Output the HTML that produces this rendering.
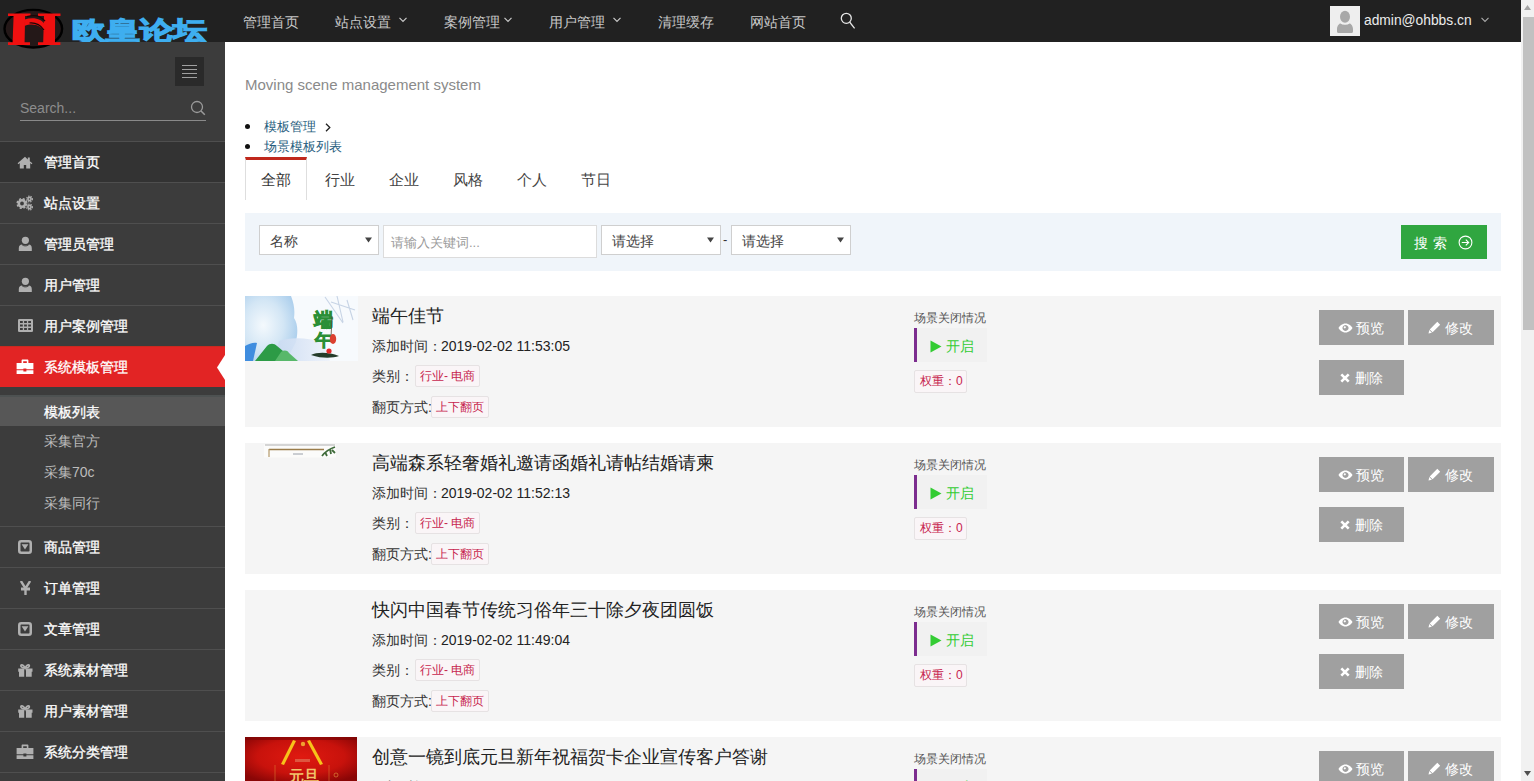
<!DOCTYPE html>
<html><head><meta charset="utf-8">
<style>
*{box-sizing:border-box;margin:0;padding:0}
html,body{width:1534px;height:781px;overflow:hidden;background:#fff;font-family:"Liberation Sans",sans-serif}
.abs{position:absolute}
#top{position:absolute;left:0;top:0;width:1521px;height:42px;background:#212121}
#side{position:absolute;left:0;top:42px;width:225px;height:739px;background:#3c3c3c}
#sb{position:absolute;left:1521px;top:0;width:13px;height:781px;background:#f1f1f1}
#main{position:absolute;left:225px;top:42px;width:1296px;height:739px;background:#fff}
.nav{position:absolute;top:14px;font-size:14px;line-height:16px;color:#c9c9c9;white-space:nowrap}
.chev{position:absolute;top:17px;width:8px;height:6px}
.mi{position:absolute;left:0;width:225px;height:41px;border-top:1px solid #4f4f4f}
.mi .t{position:absolute;left:44px;top:12px;font-size:14px;line-height:16px;color:#fff;white-space:nowrap;-webkit-text-stroke:0.3px #fff}
.mi svg{position:absolute;left:17px;top:13px}
.sub{position:absolute;left:0;width:225px;height:31px}
.sub[style*="575757"]{border-top:2px solid #4d5151}
.sub .t{position:absolute;left:44px;top:7px;font-size:14px;line-height:16px;color:#bdbdbd;white-space:nowrap}

.m{position:absolute;white-space:nowrap}
.sel{position:absolute;background:#fff;border:1px solid #cfcfcf}
.sel .t{position:absolute;left:10px;top:7px;font-size:14px;line-height:16px;color:#444}
.sel svg{position:absolute;right:6px;top:11px}
.card{position:absolute;left:20px;width:1256px;height:131px;background:#f5f5f5}
.card .title{position:absolute;left:127px;top:10px;font-size:18px;line-height:20px;color:#222}
.card .l{position:absolute;left:127px;font-size:14px;line-height:16px;color:#333;white-space:nowrap}
.tag{position:absolute;height:22px;background:#faf5f7;border:1px solid #e6e2e3;border-radius:2px;font-size:12px;line-height:20px;color:#c7254e;padding:0 4px}
.st{position:absolute;left:669px;top:15px;font-size:12px;line-height:14px;color:#555}
.onbox{position:absolute;left:669px;top:32px;width:73px;height:34px;background:#f1f1f1;border-left:3px solid #7c2d8f}
.onbox .t{position:absolute;left:29px;top:10px;font-size:14px;line-height:16px;color:#33cc33}
.onbox svg{position:absolute;left:13px;top:12px}
.wt{position:absolute;left:669px;top:74px;width:53px;height:23px;background:#faf5f7;border:1px solid #e6e2e3;border-radius:2px;font-size:12px;line-height:21px;color:#c7254e;padding-left:5px}
.btn{position:absolute;width:85px;height:35px;background:#a0a0a0;color:#fff;font-size:14px;line-height:16px}
.btn .t{position:absolute;top:10px}
.btn svg{position:absolute}
</style></head><body>
<div id="top">
  <div class="nav" style="left:243px">管理首页</div>
  <div class="nav" style="left:335px">站点设置</div>
  <svg class="chev" style="left:399px" viewBox="0 0 8 6"><path d="M0.5 0.8L4 4.5L7.5 0.8" fill="none" stroke="#c9c9c9" stroke-width="1.2"/></svg>
  <div class="nav" style="left:444px">案例管理</div>
  <svg class="chev" style="left:504px" viewBox="0 0 8 6"><path d="M0.5 0.8L4 4.5L7.5 0.8" fill="none" stroke="#c9c9c9" stroke-width="1.2"/></svg>
  <div class="nav" style="left:549px">用户管理</div>
  <svg class="chev" style="left:613px" viewBox="0 0 8 6"><path d="M0.5 0.8L4 4.5L7.5 0.8" fill="none" stroke="#c9c9c9" stroke-width="1.2"/></svg>
  <div class="nav" style="left:658px">清理缓存</div>
  <div class="nav" style="left:750px">网站首页</div>
  <svg class="abs" style="left:0;top:0;z-index:5" width="66" height="50" viewBox="0 0 66 50">
    <ellipse cx="33.3" cy="28.7" rx="28.8" ry="18.8" fill="#241818" stroke="#000" stroke-width="2.4"/>
    <path d="M8 13.5h22.5v2.6h-5.4L24.6 42.3h5.4v2.6H8v-2.6h4.6L13.6 16.1H8z" fill="#f01010"/>
    <path d="M38 13.5h22.5v2.6h-5.4L55 42.3h5.4v2.6H38v-2.6h5.2L44 16.1H38z" fill="#f01010"/>
    <path d="M24.5 19.5c9-3 17-1 21.5 6l-0.4 8c-4-8-12-11-21.2-7.5z" fill="#f01010"/>
    <path d="M27 16.6c7-2 14-0.5 18 4.5" fill="none" stroke="#1a0606" stroke-width="1.4"/>
    <path d="M29.5 23c6-0.5 11 2 14.5 7" fill="none" stroke="#1a0606" stroke-width="1.2"/>
  </svg>
  <svg class="abs" style="left:70px;top:15px" width="141" height="27" viewBox="0 0 141 27"><text x="2" y="23.5" font-family="Liberation Sans" font-weight="bold" font-size="25" fill="#3eaef0" stroke="#3eaef0" stroke-width="1.3" stroke-linejoin="miter" textLength="135" lengthAdjust="spacingAndGlyphs">欧皇论坛</text></svg>
  <svg class="abs" style="left:838px;top:11px" width="20" height="20" viewBox="0 0 20 20"><circle cx="8.3" cy="7.3" r="5" fill="none" stroke="#e6e6e6" stroke-width="1.3"/><path d="M11.6 11l5 6.3" stroke="#e6e6e6" stroke-width="1.3"/></svg>
  <div class="abs" style="left:1330px;top:6px;width:30px;height:30px;background:#eeeeee;overflow:hidden"><svg width="30" height="30" viewBox="0 0 30 30"><path d="M7 25.5v-2.5c0-3.5 2.5-6 5-6.3c0.9 0.7 1.9 1.2 3 1.2s2.1-0.5 3-1.2c2.5 0.3 5 2.8 5 6.3v2.5c0 0.8-0.6 1.5-1.5 1.5H8.5c-0.9 0-1.5-0.7-1.5-1.5z" fill="#a8a8a8"/><ellipse cx="15" cy="10.8" rx="5" ry="6" fill="#a8a8a8"/><path d="M10.5 16.6c2.5 2 6.5 2 9 0" fill="none" stroke="#f2f2f2" stroke-width="1.5"/></svg></div>
  <div class="abs" style="left:1364px;top:13px;font-size:13.8px;line-height:16px;color:#ececec;white-space:nowrap">admin@ohbbs.cn</div>
  <svg class="chev" style="left:1481px" viewBox="0 0 8 6"><path d="M0.5 0.8L4 4.5L7.5 0.8" fill="none" stroke="#aaa" stroke-width="1.1"/></svg>
</div>
<div id="side">
<div class="abs" style="left:175px;top:15px;width:29px;height:29px;background:#2a2a2a"><div class="abs" style="left:7px;top:8px;width:15px;height:1px;background:#a0a0a0"></div><div class="abs" style="left:7px;top:12px;width:15px;height:1px;background:#a0a0a0"></div><div class="abs" style="left:7px;top:16px;width:15px;height:1px;background:#a0a0a0"></div><div class="abs" style="left:7px;top:20px;width:15px;height:1px;background:#a0a0a0"></div></div>
<div class="abs" style="left:20px;top:58px;font-size:14px;line-height:16px;color:#8d8d8d">Search...</div>
<svg class="abs" style="left:190px;top:58px" width="16" height="16" viewBox="0 0 16 16"><circle cx="7" cy="7" r="5.5" fill="none" stroke="#9a9a9a" stroke-width="1.3"/><path d="M11 11l3.8 3.8" stroke="#9a9a9a" stroke-width="1.5"/></svg>
<div class="abs" style="left:20px;top:78px;width:186px;height:1px;background:#8a8a8a"></div>
<div class="mi" style="top:99px;background:#333"><svg class="ic" style="left:17px;top:14px" width="16" height="13" viewBox="0 0 16 13"><path d="M8 0.8L0.6 7.2l0.9 1L2.8 7.1V12.6h4V9h2.4v3.6h4V7.1l1.3 1.1l0.9-1L12.8 5.3V1.6h-2v2L8 0.8z" fill="#b0b0b0"/></svg><div class="t">管理首页</div></div>
<div class="mi" style="top:140px"><svg class="ic" style="left:16px;top:12px" width="18" height="16" viewBox="0 0 18 16"><g fill="none" stroke="#b0b0b0"><circle cx="6" cy="8.5" r="3.2" stroke-width="2.6"/><circle cx="6" cy="8.5" r="4.8" stroke-width="1.6" stroke-dasharray="2.1 1.7"/><circle cx="13.5" cy="4" r="1.6" stroke-width="1.6"/><circle cx="13.5" cy="4" r="2.9" stroke-width="1.2" stroke-dasharray="1.3 1.1"/><circle cx="13.5" cy="12" r="1.6" stroke-width="1.6"/><circle cx="13.5" cy="12" r="2.9" stroke-width="1.2" stroke-dasharray="1.3 1.1"/></g></svg><div class="t">站点设置</div></div>
<div class="mi" style="top:181px"><svg class="ic" style="left:18px;top:11px" width="14" height="16" viewBox="0 0 14 16"><circle cx="7.4" cy="5.3" r="3.6" fill="#b0b0b0"/><path d="M0.8 16V13.2C0.8 11 2.2 9.6 4 9.6C5 10.4 6.1 10.6 7.4 10.6C8.7 10.6 9.8 10.4 10.8 9.6C12.6 9.6 13.8 11 13.8 13.2V16z" fill="#b0b0b0"/><path d="M4 9.6C5 10.6 6.2 10.9 7.4 10.9C8.6 10.9 9.8 10.6 10.8 9.6" stroke="#3c3c3c" stroke-width="0.9" fill="none"/></svg><div class="t">管理员管理</div></div>
<div class="mi" style="top:222px"><svg class="ic" style="left:18px;top:11px" width="14" height="16" viewBox="0 0 14 16"><circle cx="7.4" cy="5.3" r="3.6" fill="#b0b0b0"/><path d="M0.8 16V13.2C0.8 11 2.2 9.6 4 9.6C5 10.4 6.1 10.6 7.4 10.6C8.7 10.6 9.8 10.4 10.8 9.6C12.6 9.6 13.8 11 13.8 13.2V16z" fill="#b0b0b0"/><path d="M4 9.6C5 10.6 6.2 10.9 7.4 10.9C8.6 10.9 9.8 10.6 10.8 9.6" stroke="#3c3c3c" stroke-width="0.9" fill="none"/></svg><div class="t">用户管理</div></div>
<div class="mi" style="top:263px"><svg class="ic" style="left:18px;top:13px" width="15" height="13" viewBox="0 0 15 13"><rect x="0" y="0" width="15" height="13" rx="1.3" fill="#b0b0b0"/><g fill="#3c3c3c"><rect x="2" y="2" width="2.8" height="2"/><rect x="6.1" y="2" width="2.8" height="2"/><rect x="10.2" y="2" width="2.8" height="2"/><rect x="2" y="5.5" width="2.8" height="2"/><rect x="6.1" y="5.5" width="2.8" height="2"/><rect x="10.2" y="5.5" width="2.8" height="2"/><rect x="2" y="9" width="2.8" height="2"/><rect x="6.1" y="9" width="2.8" height="2"/><rect x="10.2" y="9" width="2.8" height="2"/></g></svg><div class="t">用户案例管理</div></div>
<div class="mi act" style="top:304px;background:#e22424;border-top:1px solid #c92a1f"><svg class="ic" style="left:16px;top:12px" width="18" height="15" viewBox="0 0 18 15"><path d="M5.6 4V1.6C5.6 1 6 0.6 6.6 0.6h4.8c0.6 0 1 0.4 1 1V4h-1.6V2.2H7.2V4z" fill="#fff"/><path d="M0.6 4h16.8v6.3H10.4V9.4H7.4v0.9H0.6z M0.6 11.2h6.8v1.3h3V11.2h7V15H0.6z" fill="#fff"/></svg><div class="t">系统模板管理</div><svg class="abs" style="left:217px;top:8px" width="8" height="25" viewBox="0 0 8 25"><path d="M8 0L0 12.5L8 25z" fill="#fff"/></svg></div>
<div class="sub" style="top:353px;background:#575757"><div class="t" style="color:#fff;-webkit-text-stroke:0.3px #fff">模板列表</div></div>
<div class="sub" style="top:384px"><div class="t" style="">采集官方</div></div>
<div class="sub" style="top:415px"><div class="t" style="">采集70c</div></div>
<div class="sub" style="top:446px"><div class="t" style="">采集同行</div></div>
<div class="mi" style="top:484px"><svg class="ic" style="left:18px;top:13px" width="14" height="14" viewBox="0 0 14 14"><rect x="1.25" y="1.25" width="11.5" height="11.5" rx="2" fill="none" stroke="#b0b0b0" stroke-width="2.5"/><path d="M3.6 4.2h6.8L7 9.6z" fill="#b0b0b0"/></svg><div class="t">商品管理</div></div>
<div class="mi" style="top:525px"><svg class="ic" style="left:20px;top:13px" width="11" height="14" viewBox="0 0 11 14"><path d="M1.4 0.8L5.5 7.4M9.6 0.8L5.5 7.4M5.5 6.5V13.5" fill="none" stroke="#b0b0b0" stroke-width="2.4" stroke-linecap="round"/><path d="M1 6.5h9v3H1z" fill="#b0b0b0"/></svg><div class="t">订单管理</div></div>
<div class="mi" style="top:566px"><svg class="ic" style="left:18px;top:13px" width="14" height="14" viewBox="0 0 14 14"><rect x="1.25" y="1.25" width="11.5" height="11.5" rx="2" fill="none" stroke="#b0b0b0" stroke-width="2.5"/><path d="M3.6 4.2h6.8L7 9.6z" fill="#b0b0b0"/></svg><div class="t">文章管理</div></div>
<div class="mi" style="top:607px"><svg class="ic" style="left:18px;top:13px" width="15" height="14" viewBox="0 0 15 14"><path d="M0.2 5.5h6v3.3H0.2z M8 5.5h6.5v3.3H8z M1 8.8h5.2V13.8H1z M8 8.8h5.7V13.8H8z" fill="#b0b0b0"/><path d="M7.1 5.2C6 2.6 4.3 1.4 3.3 2C2.3 2.7 2.9 4.9 7.1 5.2C11.3 4.9 11.9 2.7 10.9 2C9.9 1.4 8.2 2.6 7.1 5.2z" fill="none" stroke="#b0b0b0" stroke-width="1.7"/></svg><div class="t">系统素材管理</div></div>
<div class="mi" style="top:648px"><svg class="ic" style="left:18px;top:13px" width="15" height="14" viewBox="0 0 15 14"><path d="M0.2 5.5h6v3.3H0.2z M8 5.5h6.5v3.3H8z M1 8.8h5.2V13.8H1z M8 8.8h5.7V13.8H8z" fill="#b0b0b0"/><path d="M7.1 5.2C6 2.6 4.3 1.4 3.3 2C2.3 2.7 2.9 4.9 7.1 5.2C11.3 4.9 11.9 2.7 10.9 2C9.9 1.4 8.2 2.6 7.1 5.2z" fill="none" stroke="#b0b0b0" stroke-width="1.7"/></svg><div class="t">用户素材管理</div></div>
<div class="mi" style="top:689px"><svg class="ic" style="left:16px;top:12px" width="18" height="15" viewBox="0 0 18 15"><path d="M5.6 4V1.6C5.6 1 6 0.6 6.6 0.6h4.8c0.6 0 1 0.4 1 1V4h-1.6V2.2H7.2V4z" fill="#b0b0b0"/><path d="M0.6 4h16.8v6.3H10.4V9.4H7.4v0.9H0.6z M0.6 11.2h6.8v1.3h3V11.2h7V15H0.6z" fill="#b0b0b0"/></svg><div class="t">系统分类管理</div></div>
<div class="mi" style="top:730px"></div>
</div>
<div id="main">
<div class="m" style="left:20px;top:34px;font-size:15px;line-height:17px;color:#8a8a8a">Moving scene management system</div>
<div class="abs" style="left:20px;top:82px;width:5px;height:5px;border-radius:50%;background:#111"></div>
<div class="abs" style="left:20px;top:102px;width:5px;height:5px;border-radius:50%;background:#111"></div>
<div class="m" style="left:39px;top:77px;font-size:13px;line-height:15px;color:#285e7e">模板管理</div>
<svg class="abs" style="left:100px;top:81px" width="6" height="9" viewBox="0 0 6 9"><path d="M1 0.8L4.8 4.5L1 8.2" fill="none" stroke="#222" stroke-width="1.3"/></svg>
<div class="m" style="left:39px;top:97px;font-size:13px;line-height:15px;color:#285e7e">场景模板列表</div>
<div class="abs" style="left:20px;top:115px;width:62px;height:43px;border:1px solid #dedede;border-top:3px solid #c0281c;border-bottom:none;background:#fff"></div>
<div class="m" style="left:36px;top:129px;font-size:15px;line-height:17px;color:#333">全部</div>
<div class="m" style="left:100px;top:129px;font-size:15px;line-height:17px;color:#444">行业</div>
<div class="m" style="left:164px;top:129px;font-size:15px;line-height:17px;color:#444">企业</div>
<div class="m" style="left:228px;top:129px;font-size:15px;line-height:17px;color:#444">风格</div>
<div class="m" style="left:292px;top:129px;font-size:15px;line-height:17px;color:#444">个人</div>
<div class="m" style="left:356px;top:129px;font-size:15px;line-height:17px;color:#444">节日</div>
<div class="abs" style="left:20px;top:171px;width:1256px;height:58px;background:#f0f5fa"></div>
<div class="sel" style="left:34px;top:183px;width:120px;height:30px"><div class="t">名称</div><svg width="7" height="6" viewBox="0 0 7 6"><path d="M0 0.5h7L3.5 5.5z" fill="#444"/></svg></div>
<div class="abs" style="left:158px;top:183px;width:214px;height:33px;background:#fff;border:1px solid #dcdcdc"><div class="m" style="left:7px;top:9px;font-size:13px;line-height:15px;color:#9a9a9a">请输入关键词...</div></div>
<div class="sel" style="left:376px;top:183px;width:120px;height:30px"><div class="t">请选择</div><svg width="7" height="6" viewBox="0 0 7 6"><path d="M0 0.5h7L3.5 5.5z" fill="#444"/></svg></div>
<div class="m" style="left:498px;top:190px;font-size:13px;line-height:15px;color:#333">-</div>
<div class="sel" style="left:506px;top:183px;width:120px;height:30px"><div class="t">请选择</div><svg width="7" height="6" viewBox="0 0 7 6"><path d="M0 0.5h7L3.5 5.5z" fill="#444"/></svg></div>
<div class="abs" style="left:1176px;top:183px;width:86px;height:34px;background:#30a640"><div class="m" style="left:13px;top:10px;font-size:14px;line-height:16px;color:#fff;letter-spacing:5px">搜索</div><svg class="abs" style="left:57px;top:10px" width="15" height="15" viewBox="0 0 15 15"><circle cx="7.5" cy="7.5" r="6.4" fill="none" stroke="#fff" stroke-width="1.1"/><path d="M3.8 7.5h6.8M7.8 4.6l2.9 2.9l-2.9 2.9" fill="none" stroke="#fff" stroke-width="1.1"/></svg></div>
<div class="card" style="top:254px">
  <svg class="abs" style="left:0;top:0" width="113" height="65" viewBox="0 0 113 65">
<defs><radialGradient id="cl" cx="0.35" cy="0.45" r="0.7"><stop offset="0" stop-color="#f4f9fd"/><stop offset="0.55" stop-color="#d3e6f5"/><stop offset="1" stop-color="#a9cdec"/></radialGradient>
<linearGradient id="mist" x1="0" y1="0" x2="1" y2="0"><stop offset="0" stop-color="#c9daf2"/><stop offset="1" stop-color="#eef2fa"/></linearGradient></defs>
<rect width="113" height="65" fill="#f7fafd"/>
<path d="M0 0h46c3 8 4 14 3 22c4 6 4 14 2 24l-10 19H0z" fill="url(#cl)"/>
<path d="M34 45c10-4 30-4 45 2l6 18H30z" fill="url(#mist)" opacity="0.9"/>
<path d="M0 50c4-2 8-4 12-3l-4 18H0z" fill="#3f8ddf"/>
<path d="M10 65L22 50c3-3 7-3 10 0l18 15z" fill="#2c9b46"/>
<path d="M30 65l6-9c3-2 6-2 8 1l9 8z" fill="#58b86a"/>
<text x="69" y="30" font-size="19" font-weight="bold" fill="#2a8f36" font-family="Liberation Serif" stroke="#2a8f36" stroke-width="0.8">端</text><text x="70" y="50" font-size="17" font-weight="bold" fill="#2a8f36" font-family="Liberation Serif" stroke="#2a8f36" stroke-width="0.8">午</text>
<path d="M87 20l-1 22" stroke="#5a4a3a" stroke-width="0.8"/>
<ellipse cx="88" cy="43" rx="3.2" ry="5" fill="#dc4030"/>
<path d="M66 59c6-3 18-3 28 1c-6 2-16 3-28-1z" fill="#253c2a"/>
<circle cx="84" cy="55" r="2.6" fill="#e02828"/>
<path d="M80 1l18 26M92 0l6 26M102 4l6 20M86 6l24 8" stroke="#bccbe0" stroke-width="1.1" opacity="0.8"/>
</svg>
  <div class="title">端午佳节</div>
  <div class="l" style="top:42px">添加时间：<span style="position:absolute;left:69px;top:0;color:#222">2019-02-02 11:53:05</span></div>
  <div class="l" style="top:72px">类别：</div>
  <div class="tag" style="left:170px;top:69px">行业- 电商</div>
  <div class="l" style="top:103px">翻页方式:</div>
  <div class="tag" style="left:186px;top:100px">上下翻页</div>
  <div class="st">场景关闭情况</div>
  <div class="onbox"><svg width="12" height="13" viewBox="0 0 12 13"><path d="M0.5 0.5L11.5 6.5L0.5 12.5z" fill="#33cc33"/></svg><div class="t">开启</div></div>
  <div class="wt">权重：0</div>
  <div class="btn" style="left:1074px;top:14px"><svg style="left:19px;top:13px" width="15" height="10" viewBox="0 0 15 10"><path d="M7.5 0.5C4 0.5 1.5 3 0.5 5C1.5 7 4 9.5 7.5 9.5S13.5 7 14.5 5C13.5 3 11 0.5 7.5 0.5z M7.5 2a3 3 0 1 0 0.01 0z" fill="#fff" fill-rule="evenodd"/><circle cx="6.8" cy="4.3" r="1.1" fill="#fff"/></svg><div class="t" style="left:37px">预览</div></div>
  <div class="btn" style="left:1163px;top:14px;width:86px"><svg style="left:20px;top:11px" width="13" height="13" viewBox="0 0 13 13"><path d="M9.3 0.8l2.9 2.9l-7.6 7.6l-2.9-2.9z M1.3 9.1l2.6 2.6L0.5 12.5z" fill="#fff"/></svg><div class="t" style="left:37px">修改</div></div>
  <div class="btn" style="left:1074px;top:64px"><svg style="left:21px;top:13px" width="10" height="10" viewBox="0 0 10 10"><path d="M1.3 1.3L8.7 8.7M8.7 1.3L1.3 8.7" stroke="#fff" stroke-width="2.6"/></svg><div class="t" style="left:36px">删除</div></div>
</div>
<div class="card" style="top:401px">
  <svg class="abs" style="left:17px;top:0" width="80" height="16" viewBox="0 0 80 16">
<rect x="2" y="1.5" width="72" height="13" fill="#fbfbfa"/>
<path d="M3 2h70" stroke="#c8c8c8" stroke-width="1.5"/>
<path d="M7 6.5h55" stroke="#9a7c4a" stroke-width="1.6"/>
<path d="M7 6v8" stroke="#b59a6b" stroke-width="1.2"/>
<path d="M31 11h10" stroke="#9aa0aa" stroke-width="1"/>
<path d="M60 13c3-4 7-7 13-9M63 9l2 4M68 6l1 5M70 7l3 3" stroke="#3e6a3a" stroke-width="1.8" fill="none"/>
</svg>
  <div class="title">高端森系轻奢婚礼邀请函婚礼请帖结婚请柬</div>
  <div class="l" style="top:42px">添加时间：<span style="position:absolute;left:69px;top:0;color:#222">2019-02-02 11:52:13</span></div>
  <div class="l" style="top:72px">类别：</div>
  <div class="tag" style="left:170px;top:69px">行业- 电商</div>
  <div class="l" style="top:103px">翻页方式:</div>
  <div class="tag" style="left:186px;top:100px">上下翻页</div>
  <div class="st">场景关闭情况</div>
  <div class="onbox"><svg width="12" height="13" viewBox="0 0 12 13"><path d="M0.5 0.5L11.5 6.5L0.5 12.5z" fill="#33cc33"/></svg><div class="t">开启</div></div>
  <div class="wt">权重：0</div>
  <div class="btn" style="left:1074px;top:14px"><svg style="left:19px;top:13px" width="15" height="10" viewBox="0 0 15 10"><path d="M7.5 0.5C4 0.5 1.5 3 0.5 5C1.5 7 4 9.5 7.5 9.5S13.5 7 14.5 5C13.5 3 11 0.5 7.5 0.5z M7.5 2a3 3 0 1 0 0.01 0z" fill="#fff" fill-rule="evenodd"/><circle cx="6.8" cy="4.3" r="1.1" fill="#fff"/></svg><div class="t" style="left:37px">预览</div></div>
  <div class="btn" style="left:1163px;top:14px;width:86px"><svg style="left:20px;top:11px" width="13" height="13" viewBox="0 0 13 13"><path d="M9.3 0.8l2.9 2.9l-7.6 7.6l-2.9-2.9z M1.3 9.1l2.6 2.6L0.5 12.5z" fill="#fff"/></svg><div class="t" style="left:37px">修改</div></div>
  <div class="btn" style="left:1074px;top:64px"><svg style="left:21px;top:13px" width="10" height="10" viewBox="0 0 10 10"><path d="M1.3 1.3L8.7 8.7M8.7 1.3L1.3 8.7" stroke="#fff" stroke-width="2.6"/></svg><div class="t" style="left:36px">删除</div></div>
</div>
<div class="card" style="top:548px">
  
  <div class="title">快闪中国春节传统习俗年三十除夕夜团圆饭</div>
  <div class="l" style="top:42px">添加时间：<span style="position:absolute;left:69px;top:0;color:#222">2019-02-02 11:49:04</span></div>
  <div class="l" style="top:72px">类别：</div>
  <div class="tag" style="left:170px;top:69px">行业- 电商</div>
  <div class="l" style="top:103px">翻页方式:</div>
  <div class="tag" style="left:186px;top:100px">上下翻页</div>
  <div class="st">场景关闭情况</div>
  <div class="onbox"><svg width="12" height="13" viewBox="0 0 12 13"><path d="M0.5 0.5L11.5 6.5L0.5 12.5z" fill="#33cc33"/></svg><div class="t">开启</div></div>
  <div class="wt">权重：0</div>
  <div class="btn" style="left:1074px;top:14px"><svg style="left:19px;top:13px" width="15" height="10" viewBox="0 0 15 10"><path d="M7.5 0.5C4 0.5 1.5 3 0.5 5C1.5 7 4 9.5 7.5 9.5S13.5 7 14.5 5C13.5 3 11 0.5 7.5 0.5z M7.5 2a3 3 0 1 0 0.01 0z" fill="#fff" fill-rule="evenodd"/><circle cx="6.8" cy="4.3" r="1.1" fill="#fff"/></svg><div class="t" style="left:37px">预览</div></div>
  <div class="btn" style="left:1163px;top:14px;width:86px"><svg style="left:20px;top:11px" width="13" height="13" viewBox="0 0 13 13"><path d="M9.3 0.8l2.9 2.9l-7.6 7.6l-2.9-2.9z M1.3 9.1l2.6 2.6L0.5 12.5z" fill="#fff"/></svg><div class="t" style="left:37px">修改</div></div>
  <div class="btn" style="left:1074px;top:64px"><svg style="left:21px;top:13px" width="10" height="10" viewBox="0 0 10 10"><path d="M1.3 1.3L8.7 8.7M8.7 1.3L1.3 8.7" stroke="#fff" stroke-width="2.6"/></svg><div class="t" style="left:36px">删除</div></div>
</div>
<div class="card" style="top:695px">
  <svg class="abs" style="left:0;top:0" width="112" height="44" viewBox="0 0 112 44">
<defs><radialGradient id="rd" cx="0.5" cy="0.45" r="0.65"><stop offset="0" stop-color="#e01a10"/><stop offset="0.6" stop-color="#c8120c"/><stop offset="1" stop-color="#8a0606"/></radialGradient></defs>
<rect width="112" height="44" fill="url(#rd)"/>
<path d="M0 0h112v3H0z" fill="#7a0505" opacity="0.6"/>
<path d="M48 3L36 27l3 1l12-24z" fill="#f7c21a"/>
<path d="M65 3L78 27l-3 1L62 4z" fill="#f7c21a"/>
<circle cx="58" cy="7" r="2.2" fill="#f0a030"/>
<path d="M50 22h15v3H50z" fill="#e08060" opacity="0.6"/>
<text x="44" y="44" font-size="15" font-weight="bold" fill="#f1c26a" font-family="Liberation Serif">元旦</text>
<path d="M30 28v16M84 28v16" stroke="#e8a040" stroke-width="0.7" opacity="0.6"/>
<circle cx="91" cy="38" r="2" fill="none" stroke="#e8a040" stroke-width="0.8" opacity="0.7"/>
</svg>
  <div class="title">创意一镜到底元旦新年祝福贺卡企业宣传客户答谢</div>
  <div class="l" style="top:42px">添加时间：<span style="position:absolute;left:69px;top:0;color:#222">2019-02-02 11:48:00</span></div>
  <div class="l" style="top:72px">类别：</div>
  <div class="tag" style="left:170px;top:69px">行业- 电商</div>
  <div class="l" style="top:103px">翻页方式:</div>
  <div class="tag" style="left:186px;top:100px">上下翻页</div>
  <div class="st">场景关闭情况</div>
  <div class="onbox"><svg width="12" height="13" viewBox="0 0 12 13"><path d="M0.5 0.5L11.5 6.5L0.5 12.5z" fill="#33cc33"/></svg><div class="t">开启</div></div>
  <div class="wt">权重：0</div>
  <div class="btn" style="left:1074px;top:14px"><svg style="left:19px;top:13px" width="15" height="10" viewBox="0 0 15 10"><path d="M7.5 0.5C4 0.5 1.5 3 0.5 5C1.5 7 4 9.5 7.5 9.5S13.5 7 14.5 5C13.5 3 11 0.5 7.5 0.5z M7.5 2a3 3 0 1 0 0.01 0z" fill="#fff" fill-rule="evenodd"/><circle cx="6.8" cy="4.3" r="1.1" fill="#fff"/></svg><div class="t" style="left:37px">预览</div></div>
  <div class="btn" style="left:1163px;top:14px;width:86px"><svg style="left:20px;top:11px" width="13" height="13" viewBox="0 0 13 13"><path d="M9.3 0.8l2.9 2.9l-7.6 7.6l-2.9-2.9z M1.3 9.1l2.6 2.6L0.5 12.5z" fill="#fff"/></svg><div class="t" style="left:37px">修改</div></div>
  <div class="btn" style="left:1074px;top:64px"><svg style="left:21px;top:13px" width="10" height="10" viewBox="0 0 10 10"><path d="M1.3 1.3L8.7 8.7M8.7 1.3L1.3 8.7" stroke="#fff" stroke-width="2.6"/></svg><div class="t" style="left:36px">删除</div></div>
</div>
</div>
<div id="sb"><svg class="abs" style="left:3px;top:5px" width="7" height="5" viewBox="0 0 7 5"><path d="M0 5L3.5 0L7 5z" fill="#a3a3a3"/></svg><div class="abs" style="left:2px;top:17px;width:11px;height:313px;background:#c1c1c1"></div><svg class="abs" style="left:3px;top:771px" width="7" height="5" viewBox="0 0 7 5"><path d="M0 0L3.5 5L7 0z" fill="#505050"/></svg></div>
</body></html>
